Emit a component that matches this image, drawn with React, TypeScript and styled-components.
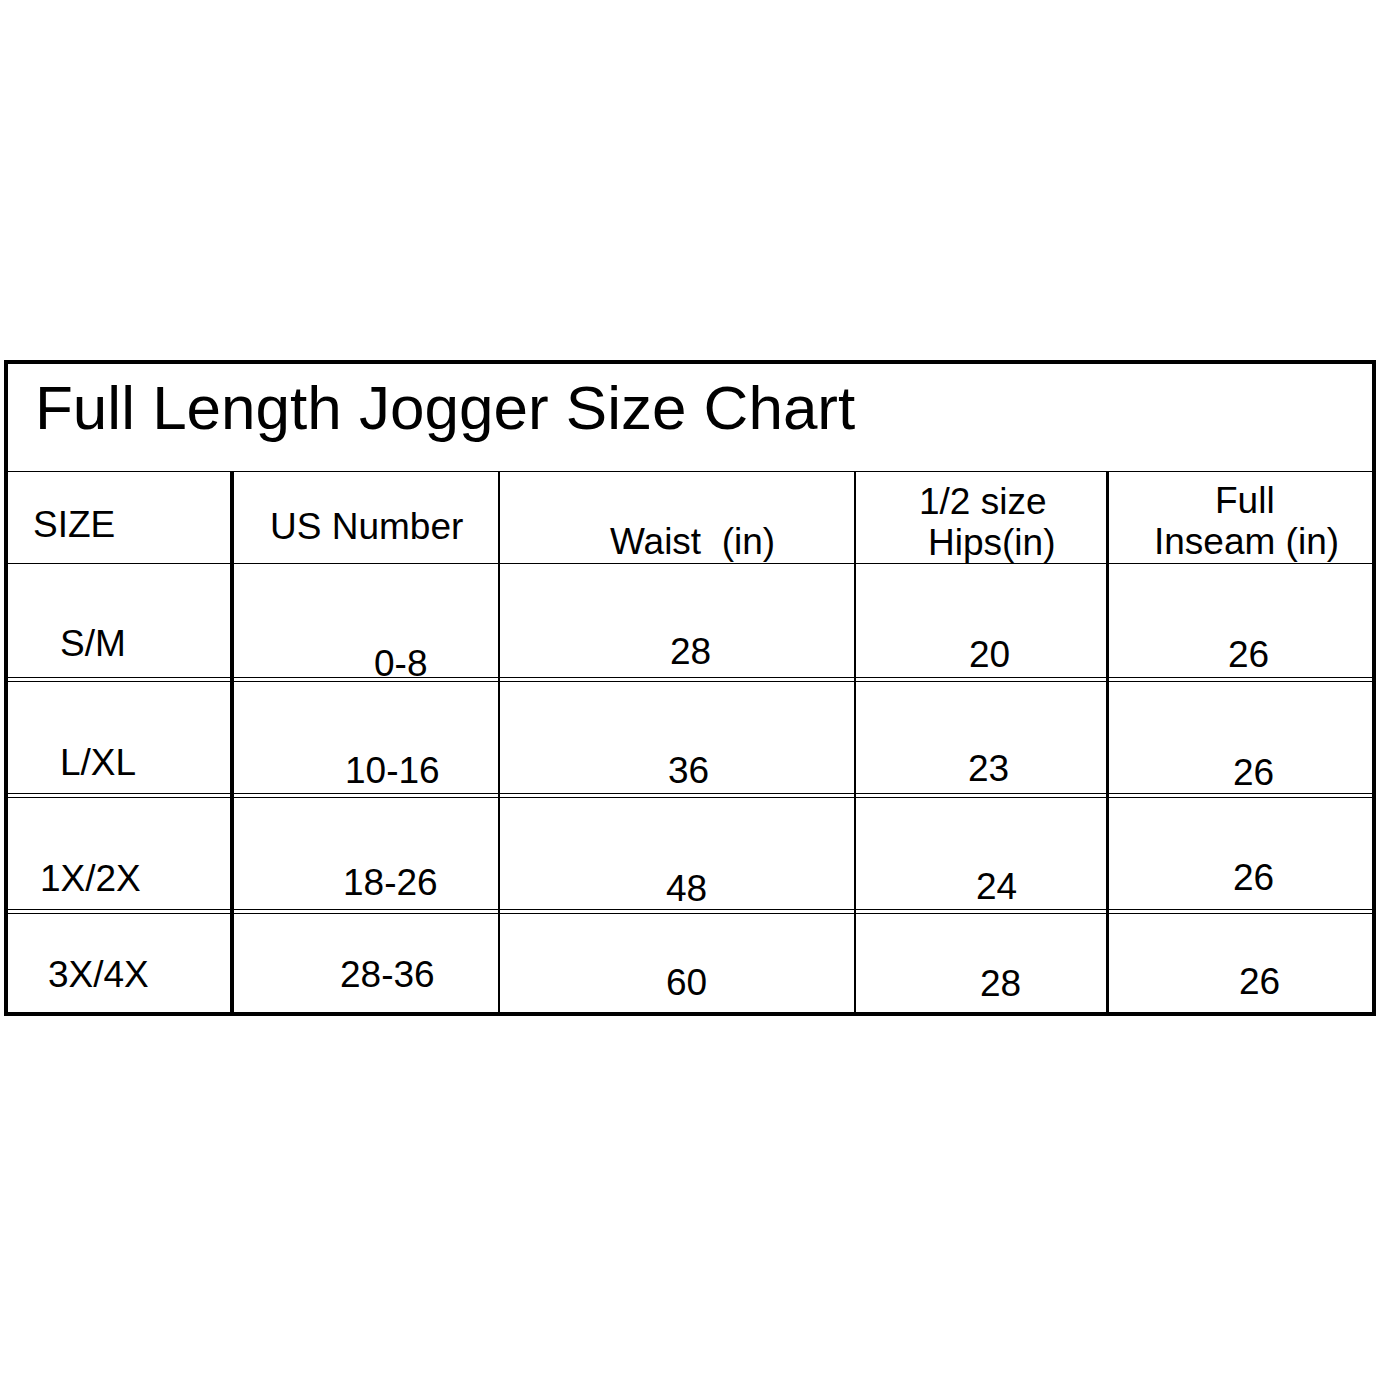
import styled, { createGlobalStyle } from 'styled-components';

const GlobalStyle = createGlobalStyle`
  html, body {
    margin: 0;
    padding: 0;
    background: #fff;
  }
  body {
    font-family: 'Liberation Sans', Arial, sans-serif;
    color: #000;
  }
`;

const Page = styled.div`
  width: 1378px;
  height: 1378px;
  padding: 360px 0 0 4px;
  box-sizing: border-box;
  background: #fff;
`;

const Chart = styled.div`
  width: 1372px;
  box-sizing: border-box;
  border: 4px solid #000;
`;

const TitleBar = styled.div`
  height: 108px;
  box-sizing: border-box;
  border-bottom: 1px solid #000;
  padding: 13px 0 0 27px;
`;

const Title = styled.h1`
  margin: 0;
  font-size: 62px;
  font-weight: 400;
  line-height: 1;
  white-space: nowrap;
`;

type Rule = 'single' | 'double' | 'none';

const Row = styled.div<{ $height: number; $rule: Rule }>`
  display: grid;
  grid-template-columns: 226px 266px 356px 253px 263px;
  height: ${({ $height }) => $height}px;
  box-sizing: border-box;
  border-bottom: ${({ $rule }) => ($rule === 'none' ? '0' : '1px solid #000')};
  background: ${({ $rule }) =>
    $rule === 'double'
      ? 'linear-gradient(#000, #000) left bottom 3px / 100% 1px no-repeat'
      : 'none'};
`;

const Cell = styled.div<{ $line: number; $top: number }>`
  box-sizing: border-box;
  border-right: ${({ $line }) => ($line ? `${$line}px solid #000` : '0')};
  padding-top: ${({ $top }) => $top}px;
  white-space: nowrap;
`;

const Text = styled.div<{ $x: number; $size: number; $leading?: number }>`
  padding-left: ${({ $x }) => $x}px;
  font-size: ${({ $size }) => $size}px;
  line-height: ${({ $size, $leading }) => $leading ?? $size}px;
`;

const rules = [4, 2, 2, 3, 0];

type Label = { text: string; x: number };
type HeadCell = { top: number; lines: Label[] };

const header: HeadCell[] = [
  { top: 34, lines: [{ text: 'SIZE', x: 25 }] },
  { top: 36, lines: [{ text: 'US Number', x: 36 }] },
  { top: 51, lines: [{ text: 'Waist\u00a0 (in)', x: 110 }] },
  {
    top: 9,
    lines: [
      { text: '1/2 size', x: 63 },
      { text: 'Hips(in)', x: 72 },
    ],
  },
  {
    top: 8,
    lines: [
      { text: 'Full', x: 106 },
      { text: 'Inseam (in)', x: 45 },
    ],
  },
];

type DataCell = { text: string; x: number; top: number };
type DataRow = { height: number; rule: Rule; cells: DataCell[] };

const rows: DataRow[] = [
  {
    height: 118,
    rule: 'double',
    cells: [
      { text: 'S/M', x: 52, top: 61 },
      { text: '0-8', x: 140, top: 81 },
      { text: '28', x: 170, top: 69 },
      { text: '20', x: 113, top: 72 },
      { text: '26', x: 119, top: 72 },
    ],
  },
  {
    height: 116,
    rule: 'double',
    cells: [
      { text: 'L/XL', x: 52, top: 62 },
      { text: '10-16', x: 111, top: 70 },
      { text: '36', x: 168, top: 70 },
      { text: '23', x: 112, top: 68 },
      { text: '26', x: 124, top: 72 },
    ],
  },
  {
    height: 116,
    rule: 'double',
    cells: [
      { text: '1X/2X', x: 32, top: 62 },
      { text: '18-26', x: 109, top: 66 },
      { text: '48', x: 166, top: 72 },
      { text: '24', x: 120, top: 70 },
      { text: '26', x: 124, top: 61 },
    ],
  },
  {
    height: 98,
    rule: 'none',
    cells: [
      { text: '3X/4X', x: 40, top: 42 },
      { text: '28-36', x: 106, top: 42 },
      { text: '60', x: 166, top: 50 },
      { text: '28', x: 124, top: 51 },
      { text: '26', x: 130, top: 49 },
    ],
  },
];

export default function App() {
  return (
    <>
      <GlobalStyle />
      <Page>
        <Chart>
          <TitleBar>
            <Title>Full Length Jogger Size Chart</Title>
          </TitleBar>
          <Row $height={92} $rule="single">
            {header.map((cell, i) => (
              <Cell key={i} $line={rules[i]} $top={cell.top}>
                {cell.lines.map((l) => (
                  <Text
                    key={l.text}
                    $x={l.x}
                    $size={37}
                    $leading={cell.lines.length > 1 ? 41 : 37}
                  >
                    {l.text}
                  </Text>
                ))}
              </Cell>
            ))}
          </Row>
          {rows.map((row, r) => (
            <Row key={r} $height={row.height} $rule={row.rule}>
              {row.cells.map((c, i) => (
                <Cell key={i} $line={rules[i]} $top={c.top}>
                  <Text $x={c.x} $size={37}>
                    {c.text}
                  </Text>
                </Cell>
              ))}
            </Row>
          ))}
        </Chart>
      </Page>
    </>
  );
}
